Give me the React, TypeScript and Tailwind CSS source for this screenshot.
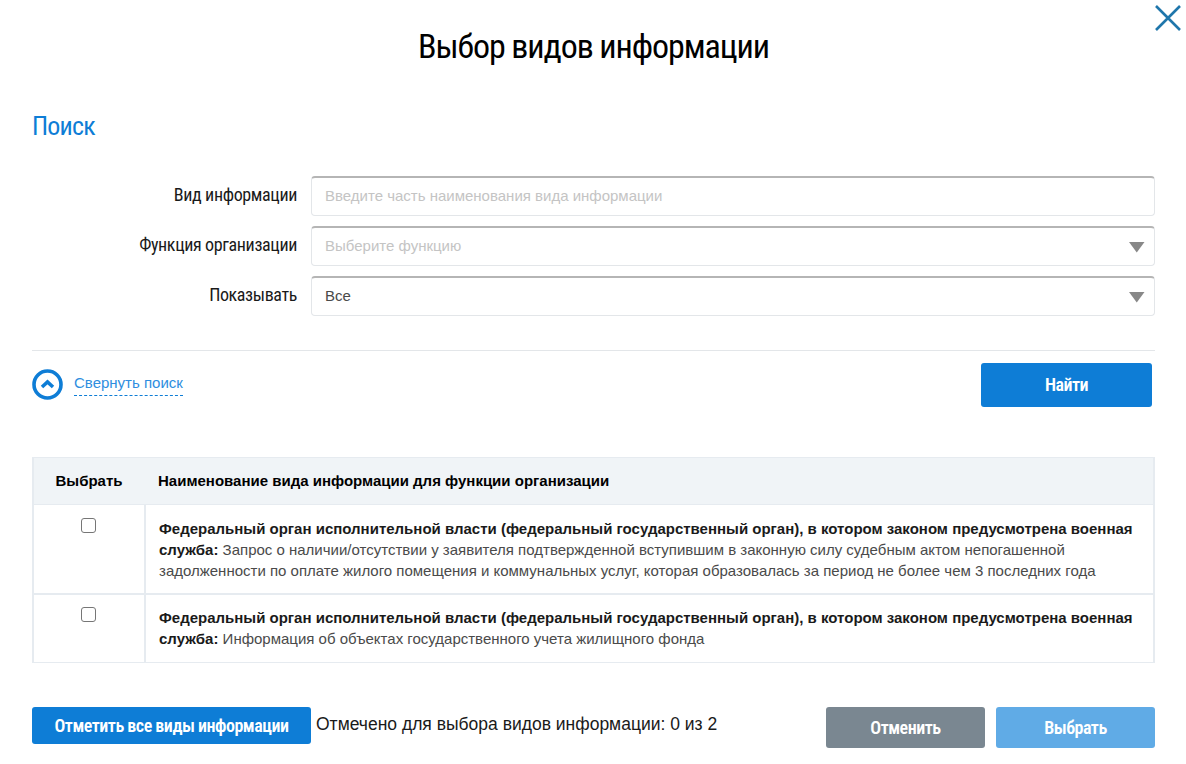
const cond = "font-['Roboto_Condensed','Roboto',sans-serif] [font-stretch:condensed]";

function Field({ label, placeholder, value, select }: { label: string; placeholder?: string; value?: string; select?: boolean }) {
  return (
    <div className="flex items-center h-10">
      <div className={`${cond} w-[265px] text-right text-[18px] tracking-[-0.37px] leading-[36px] -mt-[3px] text-[#1a1a1a] whitespace-nowrap`}>{label}</div>
      <div className="ml-[14px] flex-1 h-10 flex items-center justify-between rounded-[4px] border border-[#e3e6e9] border-t-2 border-t-[#b5b5b5] pl-[13px] pr-[9px] bg-white">
        <span className={`text-[15px] ${value ? "text-[#4a4a4a]" : "text-[#c4c4c4]"}`}>{value ?? placeholder}</span>
        {select && (
          <svg width="16" height="12" viewBox="0 0 16 12" className="block"><path d="M0 1h15.5L7.75 11.5z" fill="#888888" /></svg>
        )}
      </div>
    </div>
  );
}

function Row({ h, pt, checkPt, text, lines }: { h: string; pt: string; checkPt: string; text: string; lines?: string[] }) {
  return (
    <div className={`flex ${h} border-b-2 border-[#e6ebf0] last:border-b-0`}>
      <div className={`w-[112px] shrink-0 flex justify-center ${checkPt} pr-[2px] border-r-2 border-[#e6ebf0]`}>
        <div className="w-[15px] h-[15px] rounded-[3px] border border-[#767676] bg-white" />
      </div>
      <div className={`flex-1 pl-[13px] ${pt} text-[15px] leading-[21px] text-[#4a4a4a]`}>
        <div className="font-bold text-[#1a1a1a] whitespace-nowrap">Федеральный орган исполнительной власти (федеральный государственный орган), в котором законом предусмотрена военная</div>
        <div className="whitespace-nowrap"><b className="text-[#1a1a1a]">служба:</b> {text}</div>
        {lines?.map((l) => <div key={l} className="whitespace-nowrap">{l}</div>)}
      </div>
    </div>
  );
}

export default function App() {
  return (
    <div className="relative w-[1186px] h-[764px] overflow-hidden bg-white pl-8 pr-[31px] font-['Liberation_Sans',sans-serif]">
      <svg width="28" height="28" viewBox="0 0 28 28" className="absolute left-[1154px] top-[4px]">
        <path d="M2 2l24 24M26 2L2 26" stroke="#1f76ab" strokeWidth="2.6" fill="none" />
      </svg>

      <h1 className={`${cond} pt-[24px] text-center text-[34px] tracking-[-1.1px] leading-[44px] text-black`}>Выбор видов информации</h1>
      <h2 className={`${cond} mt-[42px] text-[26px] tracking-[-0.8px] leading-[32px] text-[#0e7dd6]`}>Поиск</h2>

      <div className="mt-[34px] flex flex-col gap-[10px]">
        <Field label="Вид информации" placeholder="Введите часть наименования вида информации" />
        <Field label="Функция организации" placeholder="Выберите функцию" select />
        <Field label="Показывать" value="Все" select />
      </div>

      <div className="mt-[34px] border-t border-[#e3e6e9] pt-3 flex justify-between pr-[3px] h-[57px]">
        <div className="flex items-center gap-[11px] h-[40px]">
          <svg width="31" height="31" viewBox="0 0 31 31" className="block mt-[3px]">
            <circle cx="15.5" cy="15.5" r="13.5" fill="none" stroke="#0e7dd6" strokeWidth="3.6" />
            <path d="M10 18l5.5-5 5.5 5" fill="none" stroke="#0e7dd6" strokeWidth="3.6" />
          </svg>
          <span className="text-[15px] leading-[20px] text-[#2e8ee0] border-b border-dashed border-[#0e7dd6] pb-[2px] mt-[2px]">Свернуть поиск</span>
        </div>
        <button className={`${cond} w-[171px] h-[44px] pb-[1px] rounded-[3px] bg-[#0e7dd6] text-white text-[18px] tracking-[-0.5px] font-semibold`}>Найти</button>
      </div>

      <div className="mt-[50px] border-2 border-[#e6ebf0] border-t border-b h-[206px] flex flex-col">
        <div className="flex h-[47px] bg-[#f0f4f7] items-center border-b border-[#e6ebf0] text-[15px] font-bold text-black shrink-0">
          <div className="w-[112px] shrink-0 text-center pr-[2px]">Выбрать</div>
          <div className="pl-[12px]">Наименование вида информации для функции организации</div>
        </div>
        <Row
          h="h-[90px]"
          pt="pt-[13px]"
          checkPt="pt-[13px]"
          text="Запрос о наличии/отсутствии у заявителя подтвержденной вступившим в законную силу судебным актом непогашенной"
          lines={["задолженности по оплате жилого помещения и коммунальных услуг, которая образовалась за период не более чем 3 последних года"]}
        />
        <Row h="flex-1" pt="pt-[12px]" checkPt="pt-[12px]" text="Информация об объектах государственного учета жилищного фонда" />
      </div>

      <div className="mt-[44px] flex items-start">
        <button className={`${cond} w-[279px] h-[37px] rounded-[3px] bg-[#0e7dd6] text-white text-[18px] tracking-[-0.5px] font-semibold whitespace-nowrap`}>Отметить все виды информации</button>
        <span className="ml-[5px] text-[17.5px] leading-[34px] text-[#1a1a1a]">Отмечено для выбора видов информации: 0 из 2</span>
        <div className="ml-auto flex gap-[11px]">
          <button className={`${cond} w-[159px] h-[41px] rounded-[3px] bg-[#7a8791] text-white text-[18px] tracking-[-0.5px] font-semibold`}>Отменить</button>
          <button className={`${cond} w-[159px] h-[41px] rounded-[3px] bg-[#60abe6] text-white text-[18px] tracking-[-0.5px] font-semibold`}>Выбрать</button>
        </div>
      </div>
    </div>
  );
}
